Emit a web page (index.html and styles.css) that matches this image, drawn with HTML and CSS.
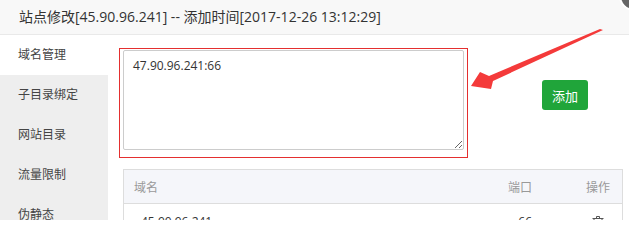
FILE: index.html
```html
<!DOCTYPE html>
<html lang="zh">
<head>
<meta charset="utf-8">
<link rel="stylesheet" href="styles.css">
</head>
<body>
<div class="dialog">
  <div class="title">站点修改[45.90.96.241] -- 添加时间[2017-12-26 13:12:29]</div>
  <div class="main">
    <ul class="menu">
      <li class="active">域名管理</li>
      <li>子目录绑定</li>
      <li>网站目录</li>
      <li>流量限制</li>
      <li>伪静态</li>
    </ul>
    <div class="content">
      <div class="form-row">
        <div class="highlight">
          <textarea class="domains">47.90.96.241:66</textarea>
        </div>
        <button class="btn-add">添加</button>
      </div>
      <table class="table">
        <thead>
          <tr><th class="c-name">域名</th><th class="c-port">端口</th><th class="c-op">操作</th></tr>
        </thead>
        <tbody>
          <tr>
            <td class="c-name first">45.90.96.241</td>
            <td class="c-port">66</td>
            <td class="c-op">
              <svg class="trash" width="12" height="13" viewBox="0 0 12 13"><path d="M4.5 2V0.5h3V2M0.5 2.5h11M2 3v9.5h8V3" fill="none" stroke="#555" stroke-width="1"/></svg>
            </td>
          </tr>
        </tbody>
      </table>
    </div>
  </div>
  <span class="close"></span>
</div>
<svg class="arrow" width="629" height="220" viewBox="0 0 629 220">
  <polygon points="471,86 480,72 489,76 600,29 603,30 493,81 491,89" fill="#f43a3a"/>
</svg>
</body>
</html>
```

FILE: styles.css
```css
html, body {
  margin: 0;
  padding: 0;
  background: #fff;
  width: 629px;
  height: 220px;
  overflow: hidden;
  font-family: "Open Sans", "Noto Sans CJK SC", sans-serif;
  color: #333;
}
.dialog {
  position: relative;
  width: 629px;
  height: 220px;
}
.title {
  height: 34px;
  line-height: 34px;
  padding-left: 19px;
  font-size: 14px;
  background: #f8f8f8;
  border-bottom: 1px solid #e9e9e9;
  color: #333;
}
.main {
  display: flex;
  height: 185px;
}
.menu {
  list-style: none;
  margin: 0;
  padding: 0;
  width: 108px;
  background: #eeeeee;
  flex: none;
}
.menu li {
  height: 40px;
  line-height: 40px;
  padding-left: 18px;
  font-size: 12px;
  color: #444;
}
.menu li.active {
  background: #fff;
}
.content {
  flex: 1;
  padding: 13px 0 0 11px;
}
.form-row {
  display: flex;
  align-items: flex-start;
}
.highlight {
  border: 1px solid #e42f2f;
  padding: 1px 3px 7px 3px;
  width: 341px;
  height: 100px;
}
.domains {
  display: block;
  box-sizing: border-box;
  width: 341px;
  height: 100px;
  margin: 0;
  border: 1px solid #ccc;
  border-radius: 2px;
  padding: 5px 9px;
  font-family: "Open Sans", "Noto Sans CJK SC", sans-serif;
  font-size: 12px;
  line-height: 20px;
  color: #333;
  resize: both;
  outline: none;
}
.btn-add {
  margin: 32px 0 0 74px;
  width: 46px;
  height: 30px;
  border: none;
  border-radius: 3px;
  background: #20a53a;
  color: #fff;
  font-family: "Open Sans", "Noto Sans CJK SC", sans-serif;
  font-size: 13px;
  padding: 0;
}
.table {
  margin: 11px 0 0 4px;
  width: 500px;
  border-collapse: collapse;
  border: 1px solid #ddd;
  font-size: 12px;
}
.table th {
  height: 33px;
  background: #f5f6fa;
  color: #999;
  font-weight: normal;
  border-bottom: 1px solid #ddd;
  padding: 0;
}
.table td {
  height: 33px;
  padding: 0;
  vertical-align: top;
  padding-top: 10px;
  line-height: 16px;
  color: #333;
}
.c-name { text-align: left; padding-left: 10px !important; }
.table td.first { padding-left: 17px !important; }
.c-port { text-align: right; width: 80px; }
.c-op { text-align: right; width: 78px; padding-right: 12px !important; }
.trash { display: inline-block; margin-right: 6px; margin-top: 2px; vertical-align: top; }
.close {
  position: absolute;
  right: -20px;
  top: -19px;
  width: 26px;
  height: 26px;
  border-radius: 50%;
  background: #666;
  border: 2px solid #fff;
}
.arrow {
  position: absolute;
  left: 0;
  top: 0;
  pointer-events: none;
}
```
